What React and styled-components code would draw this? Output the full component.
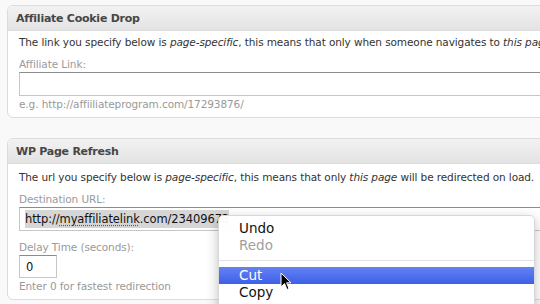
import styled, { createGlobalStyle } from "styled-components";

const GlobalStyle = createGlobalStyle`
  html, body {
    margin: 0;
    padding: 0;
    background: #f9f9f9;
    overflow: hidden;
  }
  body {
    width: 540px;
    height: 304px;
    font-family: "DejaVu Sans", "Liberation Sans", sans-serif;
  }
`;

const Page = styled.div`
  position: relative;
  width: 540px;
  height: 304px;
  overflow: hidden;
  padding: 5px 0 0 7px;
  box-sizing: border-box;
  display: flex;
  flex-direction: column;
  gap: 20px;
`;

const Panel = styled.section`
  width: 600px;
  background: #fff;
  border: 1px solid #dcdcdc;
  border-radius: 6px;
  box-sizing: border-box;
  flex-shrink: 0;
`;

const PanelHeader = styled.h3`
  margin: 0;
  height: 24px;
  padding: 0 0 0 8px;
  display: flex;
  align-items: center;
  font-size: 11px;
  letter-spacing: -0.25px;
  font-weight: bold;
  color: #464646;
  background: linear-gradient(#f2f2f2, #e3e3e3);
  border-bottom: 1px solid #dcdcdc;
  border-radius: 6px 6px 0 0;
`;

const PanelBody = styled.div`
  padding: ${({ $top }) => $top}px 0 6px 11px;
  display: flex;
  flex-direction: column;
`;

const Intro = styled.p`
  margin: 0 0 7px;
  font-size: 10.5px;
  letter-spacing: -0.1px;
  line-height: 16px;
  color: #333;
  white-space: nowrap;
`;

const Label = styled.label`
  font-size: 10.5px;
  letter-spacing: -0.1px;
  line-height: 14px;
  color: #9a9a9a;
`;

const Field = styled.div`
  margin-top: 1px;
  width: ${({ $width }) => $width};
  height: ${({ $height }) => $height || "24px"};
  box-sizing: border-box;
  border: 1px solid #c6c6c6;
  border-top-color: #8c8c8c;
  background: #fff;
  display: flex;
  align-items: center;
  padding-left: ${({ $pad }) => $pad || "5px"};
  font-size: 11.5px;
  letter-spacing: -0.1px;
  color: #111;
`;

const Selected = styled.span`
  background: #d6d6d6;
  padding: 2px 0;
  white-space: nowrap;
`;

const Misspelled = styled.span`
  text-decoration: underline dotted #e02020;
  text-underline-offset: 2px;
`;

const Hint = styled.div`
  margin-top: 1px;
  font-size: 10.5px;
  letter-spacing: -0.1px;
  line-height: 14px;
  color: #999;
`;

const Spacer = styled.div`
  height: ${({ $h }) => $h}px;
`;

const Menu = styled.div`
  position: absolute;
  left: 218px;
  top: 215px;
  width: 317px;
  height: 120px;
  background: rgba(255, 255, 255, 0.97);
  border: 1px solid #d8d8d8;
  border-radius: 5px;
  box-shadow: 0 4px 12px rgba(0, 0, 0, 0.25);
  padding-top: 4px;
  box-sizing: border-box;
  font-family: "DejaVu Sans", sans-serif;
  font-size: 13.5px;
`;

const MenuItem = styled.div`
  height: 17px;
  line-height: 17px;
  padding-left: 20px;
  color: ${({ $disabled, $active }) => ($active ? "#fff" : $disabled ? "#a0a0a0" : "#111")};
  background: ${({ $active }) => ($active ? "linear-gradient(#6582f4, #3d5fe6)" : "transparent")};
`;

const Separator = styled.div`
  height: 1px;
  background: #e2e2e2;
  margin: 6px 0 6px;
`;

const Cursor = styled.svg`
  position: absolute;
  left: 280px;
  top: 272px;
`;

export default function App() {
  return (
    <>
      <GlobalStyle />
      <Page>
        <Panel>
          <PanelHeader>Affiliate Cookie Drop</PanelHeader>
          <PanelBody $top={3}>
            <Intro>
              The link you specify below is <em>page-specific</em>, this means that only when someone navigates to <em>this page</em> the cookie is dropped.
            </Intro>
            <Label>Affiliate Link:</Label>
            <Field $width="600px" />
            <Hint>e.g. http://affiiliateprogram.com/17293876/</Hint>
          </PanelBody>
        </Panel>
        <Panel>
          <PanelHeader>WP Page Refresh</PanelHeader>
          <PanelBody $top={5}>
            <Intro>
              The url you specify below is <em>page-specific</em>, this means that only <em>this page</em> will be redirected on load.
            </Intro>
            <Label>Destination URL:</Label>
            <Field $width="600px">
              <Selected>
                http://<Misspelled>myaffiliatelink</Misspelled>.com/23409673
              </Selected>
            </Field>
            <Spacer $h={9} />
            <Label>Delay Time (seconds):</Label>
            <Field $width="38px" $height="23px" $pad="6px">0</Field>
            <Hint>Enter 0 for fastest redirection</Hint>
          </PanelBody>
        </Panel>
        <Menu>
          <MenuItem>Undo</MenuItem>
          <MenuItem $disabled>Redo</MenuItem>
          <Separator />
          <MenuItem $active>Cut</MenuItem>
          <MenuItem>Copy</MenuItem>
        </Menu>
        <Cursor width="12" height="19" viewBox="0 0 12 19">
          <path d="M1 1 L1 15 L4.5 11.5 L7 17.5 L9 16.6 L6.6 10.8 L11 10.8 Z" fill="#000" stroke="#fff" strokeWidth="1" />
        </Cursor>
      </Page>
    </>
  );
}
